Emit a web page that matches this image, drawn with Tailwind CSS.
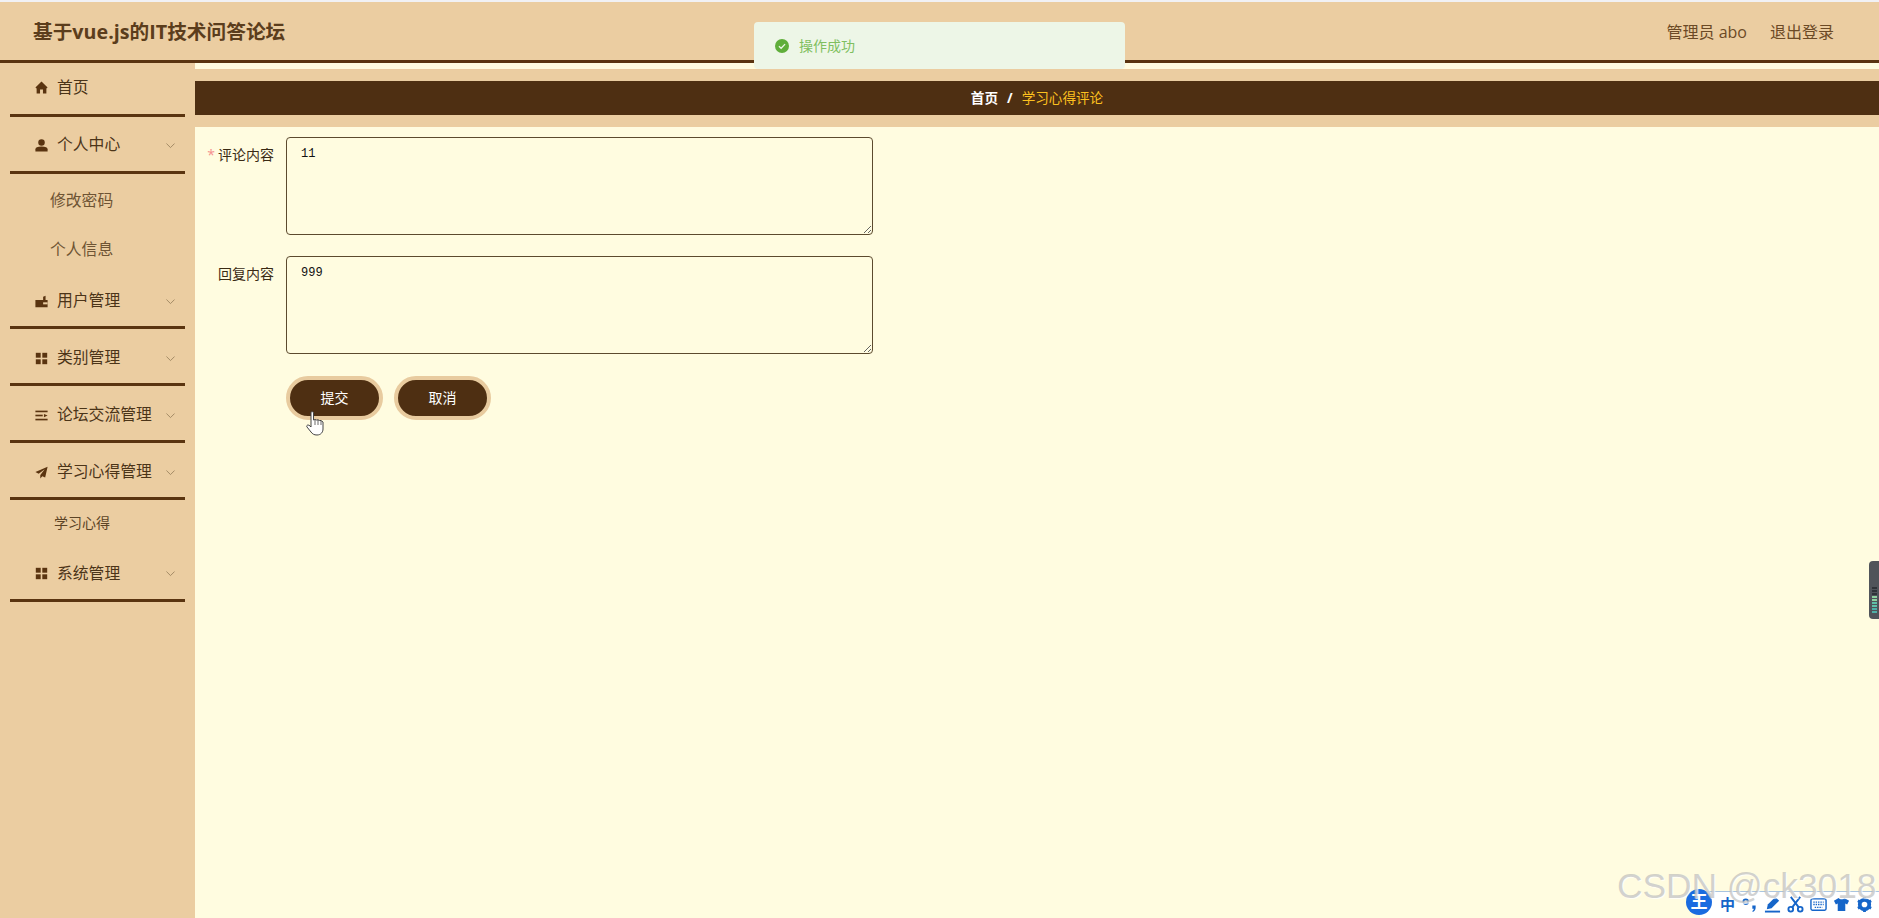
<!DOCTYPE html>
<html lang="zh-CN">
<head>
    <meta charset="UTF-8">
    <title>基于vue.js的IT技术问答论坛</title>
    <script src="https://cdn.jsdelivr.net/npm/@tailwindcss/browser@4"></script>
</head>
<body class="h-[918px] w-[1879px] overflow-hidden bg-[#fffce0] font-['Open_Sans','Noto_Sans_CJK_SC',sans-serif]">

    <!-- Header -->
    <div class="h-[2px] bg-[#f1f1f4]"></div>
    <header class="flex h-[61px] items-center justify-between border-b-[3px] border-[#5a3410] bg-[#ebcda1] pl-[33px] pr-[45px] pt-[2px]">
        <h1 class="text-[19.700px] font-bold text-[#5b3d1c]">基于vue.js的IT技术问答论坛</h1>
        <div class="flex gap-[23px] text-[16px] text-[#6b4a26]">
            <span>管理员 abo</span>
            <span>退出登录</span>
        </div>
    </header>

    <div class="flex h-[855px]">
        <!-- Sidebar -->
        <aside class="w-[195px] shrink-0 bg-[#ebcda1] px-[10px] text-[15.800px] text-[#4b3418]">
            <div class="flex h-[54px] items-center border-b-[3px] border-[#5a3410] pb-[2px] pl-[25px]">
                <svg class="mr-[9px] h-[13px] w-[13px]" viewBox="0 0 16 16" fill="#5a3410"><path d="M8 0.5 0.5 8 2 9.2V15.5H6.2V10.5H9.8V15.5H14V9.2L15.5 8Z"/></svg>
                <span>首页</span>
            </div>

            <div class="flex h-[57px] items-center justify-between border-b-[3px] border-[#5a3410] pl-[25px] pr-[10px] pt-[2px]">
                <span class="flex items-center">
                    <svg class="mr-[9px] h-[13px] w-[13px]" viewBox="0 0 16 16" fill="#5a3410"><circle cx="8" cy="4.2" r="4"/><path d="M0.5 15.5V12.5C0.5 10.2 3 9.2 8 9.2S15.500 10.2 15.500 12.500V15.500Z"/></svg>
                    个人中心
                </span>
                <svg class="h-[9px] w-[9px]" viewBox="0 0 10 10" fill="none" stroke="#9c8460" stroke-width="1"><path d="M0.500 2.800 5 7.300 9.500 2.800"/></svg>
            </div>
            <div class="flex h-[49px] items-center pl-[40px] pt-[4px] text-[#6e5434]">修改密码</div>
            <div class="flex h-[49px] items-center pl-[40px] pt-[4px] text-[#6e5434]">个人信息</div>

            <div class="flex h-[57px] items-center justify-between border-b-[3px] border-[#5a3410] pl-[25px] pr-[10px] pt-[4px]">
                <span class="flex items-center">
                    <svg class="mr-[9px] h-[13px] w-[13px]" viewBox="0 0 16 16" fill="#5a3410"><path d="M0.500 6H10V2L13 1V6H15.500V15H0.500Z"/><rect x="10" y="9" width="5.500" height="2.500" fill="#ebcda1"/></svg>
                    用户管理
                </span>
                <svg class="h-[9px] w-[9px]" viewBox="0 0 10 10" fill="none" stroke="#9c8460" stroke-width="1"><path d="M0.500 2.800 5 7.300 9.500 2.800"/></svg>
            </div>

            <div class="flex h-[57px] items-center justify-between border-b-[3px] border-[#5a3410] pl-[25px] pr-[10px] pt-[4px]">
                <span class="flex items-center">
                    <svg class="mr-[9px] h-[13px] w-[13px]" viewBox="0 0 16 16" fill="#5a3410"><rect x="1" y="1" width="6" height="6"/><rect x="9" y="1" width="6" height="6"/><rect x="1" y="9" width="6" height="6"/><rect x="9" y="9" width="6" height="6"/></svg>
                    类别管理
                </span>
                <svg class="h-[9px] w-[9px]" viewBox="0 0 10 10" fill="none" stroke="#9c8460" stroke-width="1"><path d="M0.500 2.800 5 7.300 9.500 2.800"/></svg>
            </div>

            <div class="flex h-[57px] items-center justify-between border-b-[3px] border-[#5a3410] pl-[25px] pr-[10px] pt-[4px]">
                <span class="flex items-center">
                    <svg class="mr-[9px] h-[13px] w-[13px]" viewBox="0 0 16 16" fill="#5a3410"><rect x="0.500" y="2" width="15" height="2"/><rect x="0.500" y="7" width="9" height="2"/><path d="M11 6 15.500 8 11 10Z"/><rect x="0.500" y="12" width="15" height="2"/></svg>
                    论坛交流管理
                </span>
                <svg class="h-[9px] w-[9px]" viewBox="0 0 10 10" fill="none" stroke="#9c8460" stroke-width="1"><path d="M0.500 2.800 5 7.300 9.500 2.800"/></svg>
            </div>

            <div class="flex h-[57px] items-center justify-between border-b-[3px] border-[#5a3410] pl-[25px] pr-[10px] pt-[4px]">
                <span class="flex items-center">
                    <svg class="mr-[9px] h-[13px] w-[13px]" viewBox="0 0 16 16" fill="#5a3410"><path d="M15.500 1 0.500 7.500 4.500 9.500 12 4 6.500 11V15.500L9 12.500 12.500 14Z"/></svg>
                    学习心得管理
                </span>
                <svg class="h-[9px] w-[9px]" viewBox="0 0 10 10" fill="none" stroke="#9c8460" stroke-width="1"><path d="M0.500 2.800 5 7.300 9.500 2.800"/></svg>
            </div>
            <div class="flex h-[45px] items-center pl-[44px] text-[14px] text-[#5c4426]">学习心得</div>

            <div class="flex h-[57px] items-center justify-between border-b-[3px] border-[#5a3410] pl-[25px] pr-[10px] pt-[3px]">
                <span class="flex items-center">
                    <svg class="mr-[9px] h-[13px] w-[13px]" viewBox="0 0 16 16" fill="#5a3410"><rect x="1" y="1" width="6" height="6"/><rect x="9" y="1" width="6" height="6"/><rect x="1" y="9" width="6" height="6"/><rect x="9" y="9" width="6" height="6"/></svg>
                    系统管理
                </span>
                <svg class="h-[9px] w-[9px]" viewBox="0 0 10 10" fill="none" stroke="#9c8460" stroke-width="1"><path d="M0.500 2.800 5 7.300 9.500 2.800"/></svg>
            </div>
        </aside>

        <!-- Main -->
        <main class="flex-1">
            <div class="h-[6px] bg-[#fffce0]"></div>
            <div class="bg-[#ebcda1] py-[12px]">
                <div class="flex h-[34px] items-center justify-center gap-[9px] bg-[#4e2f12] pt-[1px] text-[13.600px]">
                    <span class="font-bold text-white">首页</span>
                    <span class="font-bold text-white">/</span>
                    <span class="text-[#fdc11f]">学习心得评论</span>
                </div>
            </div>

            <form class="pl-[12px] pt-[10px] text-[14px] text-[#3a2a14]">
                <div class="mb-[21px] flex">
                    <label class="flex w-[67px] shrink-0 justify-end whitespace-nowrap pt-[8px] leading-[20px]"><span class="mr-[3px] text-[#f58f8f]">*</span>评论内容</label>
                    <textarea class="ml-[12px] h-[98px] w-[587px] rounded-[4px] border border-[#5c4a2e] bg-[#fffce0] px-[14px] py-[7px] font-['Liberation_Mono',monospace] text-[12px] leading-[18px] text-[#111]">11</textarea>
                </div>
                <div class="mb-[22px] flex">
                    <label class="flex w-[67px] shrink-0 justify-end whitespace-nowrap pt-[8px] leading-[20px]">回复内容</label>
                    <textarea class="ml-[12px] h-[98px] w-[587px] rounded-[4px] border border-[#5c4a2e] bg-[#fffce0] px-[14px] py-[7px] font-['Liberation_Mono',monospace] text-[12px] leading-[18px] text-[#111]">999</textarea>
                </div>
                <div class="ml-[67px] flex gap-[11px] pl-[12px]">
                    <button type="button" class="h-[44px] w-[97px] rounded-full border-[4px] border-[#e8cb9f] bg-[#4e2f12] pb-[2px] text-[14px] text-white">提交</button>
                    <button type="button" class="h-[44px] w-[97px] rounded-full border-[4px] border-[#e8cb9f] bg-[#4e2f12] pb-[2px] text-[14px] text-white">取消</button>
                </div>
            </form>
        </main>
    </div>

    <!-- Toast -->
    <div class="absolute left-[754px] top-[22px] flex h-[47px] w-[371px] items-center rounded-[4px] bg-[#edf6e7] pl-[21px] text-[14px] text-[#7fbf5f]">
        <svg class="mr-[10px] h-[14px] w-[14px]" viewBox="0 0 16 16"><circle cx="8" cy="8" r="8" fill="#5fae3a"/><path d="M4.500 8.200 7 10.600 11.500 5.800" fill="none" stroke="#edf6e7" stroke-width="1.500"/></svg>
        操作成功
    </div>

    <!-- Hand cursor -->
    <svg class="absolute left-[306px] top-[411px] h-[25px] w-[20px]" viewBox="0 0 20 25">
        <path d="M5 1.500C5 0.500 7.500 0.500 7.500 1.500V9L9 8.500 10.500 9 12 8.800 13.500 9.500 15 9.500 17 11V18C17 21 15 24 11 24 8 24 6.500 23 5 21L1 16C0 14.500 2 13 4 15L5 16Z" fill="#fff" stroke="#444" stroke-width="1"/>
        <path d="M9 9V14M12 9V14M15 10V14" stroke="#444" stroke-width="0.800"/>
    </svg>

    <!-- Side widget -->
    <div class="absolute left-[1869px] top-[561px] flex h-[58px] w-[10px] flex-col justify-end gap-[1px] rounded-l-[4px] bg-[#50545a] pb-[6px] pl-[3px]">
        <div class="h-[2px] w-[5px] bg-[#2f3338]"></div>
        <div class="h-[2px] w-[5px] bg-[#2f3338]"></div>
        <div class="h-[2px] w-[5px] bg-[#2f3338]"></div>
        <div class="h-[2px] w-[5px] bg-[#8fd3a0]"></div>
        <div class="h-[2px] w-[5px] bg-[#8fd3a0]"></div>
        <div class="h-[2px] w-[5px] bg-[#5fc0a8]"></div>
        <div class="h-[2px] w-[5px] bg-[#5fc0a8]"></div>
        <div class="h-[2px] w-[5px] bg-[#4fb0a8]"></div>
        <div class="h-[2px] w-[5px] bg-[#4fb0a8]"></div>
    </div>

    <!-- IME toolbar -->
    <div class="absolute left-[1700px] top-[891px] flex h-[27px] w-[179px] items-center gap-[6px] border-t border-[#a9c4e0] bg-white pb-[2px] pl-[20px] text-[#1565c9]">
        <span class="text-[15px] font-bold leading-none">中</span>
        <svg class="h-[17px] w-[17px]" viewBox="0 0 18 18"><circle cx="5" cy="6" r="2.500" fill="none" stroke="#1565c9" stroke-width="1.800"/><path d="M12 10H15.500V12.500C15.500 14.500 14.500 16 12.500 17L12 15.800C13 15.300 13.500 14.500 13.500 13.500H12Z" fill="#1565c9"/></svg>
        <svg class="h-[17px] w-[17px]" viewBox="0 0 18 18" fill="#1565c9"><path d="M12 1 16 5 8 13 3 14 4 9Z"/><rect x="1" y="15.500" width="16" height="2"/></svg>
        <svg class="h-[17px] w-[17px]" viewBox="0 0 18 18" fill="none" stroke="#1565c9" stroke-width="2"><circle cx="4" cy="14" r="2.500"/><circle cx="14" cy="14" r="2.500"/><path d="M5.500 12 14 1M12.500 12 4 1"/></svg>
        <svg class="h-[17px] w-[17px]" viewBox="0 0 18 18"><rect x="1" y="3" width="16" height="12" rx="1.500" fill="none" stroke="#1565c9" stroke-width="1.500"/><path d="M3.500 6.500H14.500M3.500 9H14.500M5 12H13" stroke="#1565c9" stroke-width="1.500" stroke-dasharray="1.500 1"/></svg>
        <svg class="h-[17px] w-[17px]" viewBox="0 0 18 18" fill="#1565c9"><path d="M6 2 1 5 3 9 5 8V16H13V8L15 9 17 5 12 2C11 4 7 4 6 2Z"/></svg>
        <svg class="h-[17px] w-[17px]" viewBox="0 0 18 18"><circle cx="9" cy="9" r="5" fill="none" stroke="#1565c9" stroke-width="4"/><path d="M9 1V3M9 15V17M2 5 4 6M14 12 16 13M2 13 4 12M14 6 16 5" stroke="#1565c9" stroke-width="3"/></svg>
    </div>
    <div class="absolute left-[1686px] top-[889px] flex h-[26px] w-[26px] items-center justify-center rounded-full bg-[#1a6be0] text-[17px] font-bold text-white">王</div>

    <!-- Watermark -->
    <div class="absolute left-[1617px] top-[862px] whitespace-nowrap font-['Liberation_Sans',sans-serif] text-[35.300px] leading-[48px] text-[#b4b4b4]/60 [text-shadow:1px_1px_1px_rgba(255,255,255,0.8)]">CSDN @ck3018</div>

</body>
</html>
